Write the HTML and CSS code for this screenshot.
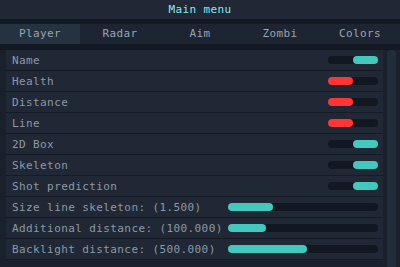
FILE: index.html
```html
<!DOCTYPE html>
<html lang="en">
<head>
  <meta charset="UTF-8">
  <title>Main menu</title>
  <link rel="stylesheet" href="styles.css">
</head>
<body>
  <div class="window">
    <div class="title-bar">Main menu</div>
    <div class="tabs">
      <div class="tab active">Player</div>
      <div class="tab">Radar</div>
      <div class="tab">Aim</div>
      <div class="tab">Zombi</div>
      <div class="tab">Colors</div>
    </div>
    <div class="body">
      <div class="list">
        <div class="row"><span>Name</span><div class="toggle on"></div></div>
        <div class="row"><span>Health</span><div class="toggle off"></div></div>
        <div class="row"><span>Distance</span><div class="toggle off"></div></div>
        <div class="row"><span>Line</span><div class="toggle off"></div></div>
        <div class="row"><span>2D Box</span><div class="toggle on"></div></div>
        <div class="row"><span>Skeleton</span><div class="toggle on"></div></div>
        <div class="row"><span>Shot prediction</span><div class="toggle on"></div></div>
        <div class="row"><span>Size line skeleton: (1.500)</span><div class="slider"><div class="fill" style="width: 45px"></div></div></div>
        <div class="row"><span>Additional distance: (100.000)</span><div class="slider"><div class="fill" style="width: 38px"></div></div></div>
        <div class="row"><span>Backlight distance: (500.000)</span><div class="slider"><div class="fill" style="width: 79px"></div></div></div>
      </div>
      <div class="scrollbar"><div class="thumb"></div></div>
    </div>
  </div>
</body>
</html>
```

FILE: styles.css
```css
/* Page */
body {
  margin: 0;
  background: #171e28;
  font-family: "DejaVu Sans Mono", "Liberation Mono", monospace;
  font-size: 11px;
  letter-spacing: 0.4px;
  overflow: hidden;
}

.window {
  width: 400px;
  height: 267px;
  background: #121922;
  display: flex;
  flex-direction: column;
}

/* Title */
.title-bar {
  height: 19px;
  line-height: 19px;
  background: #1f2834;
  color: #8fe6ee;
  text-align: center;
}

/* Tabs */
.tabs {
  margin-top: 5px;
  height: 20px;
  display: grid;
  grid-template-columns: repeat(5, 80px);
  background: #1c2531;
}

.tab {
  line-height: 20px;
  text-align: center;
  color: #9aa6b3;
}

.tab.active {
  background: #253241;
}

/* Content list */
.body {
  margin-top: 6px;
  flex: 1;
  display: flex;
  background: #19212c;
}

.list {
  margin-left: 6px;
  width: 377px;
  align-self: flex-start;
}

.row {
  height: 20px;
  border-bottom: 1px solid #141b24;
  background: #1f2834;
  display: flex;
  align-items: center;
  justify-content: space-between;
  padding: 0 5px 0 6px;
  color: #8e99a5;
}

.toggle {
  width: 50px;
  height: 8px;
  border-radius: 4px;
  background: #111822;
  position: relative;
}

.toggle::after {
  content: "";
  position: absolute;
  top: 0;
  width: 25px;
  height: 8px;
  border-radius: 4px;
}

.toggle.on::after {
  right: 0;
  background: #43c8bd;
}

.toggle.off::after {
  left: 0;
  background: #ff3434;
}

.slider {
  width: 150px;
  height: 8px;
  border-radius: 4px;
  background: #111822;
}

.slider .fill {
  height: 8px;
  border-radius: 4px;
  background: #43c8bd;
}

/* Scrollbar */
.scrollbar {
  margin-left: 4px;
  width: 9px;
  padding-right: 4px;
  background: #19212c;
}

.thumb {
  height: 100%;
  border-radius: 4px 4px 0 0;
  background: #232d3a;
}
```
